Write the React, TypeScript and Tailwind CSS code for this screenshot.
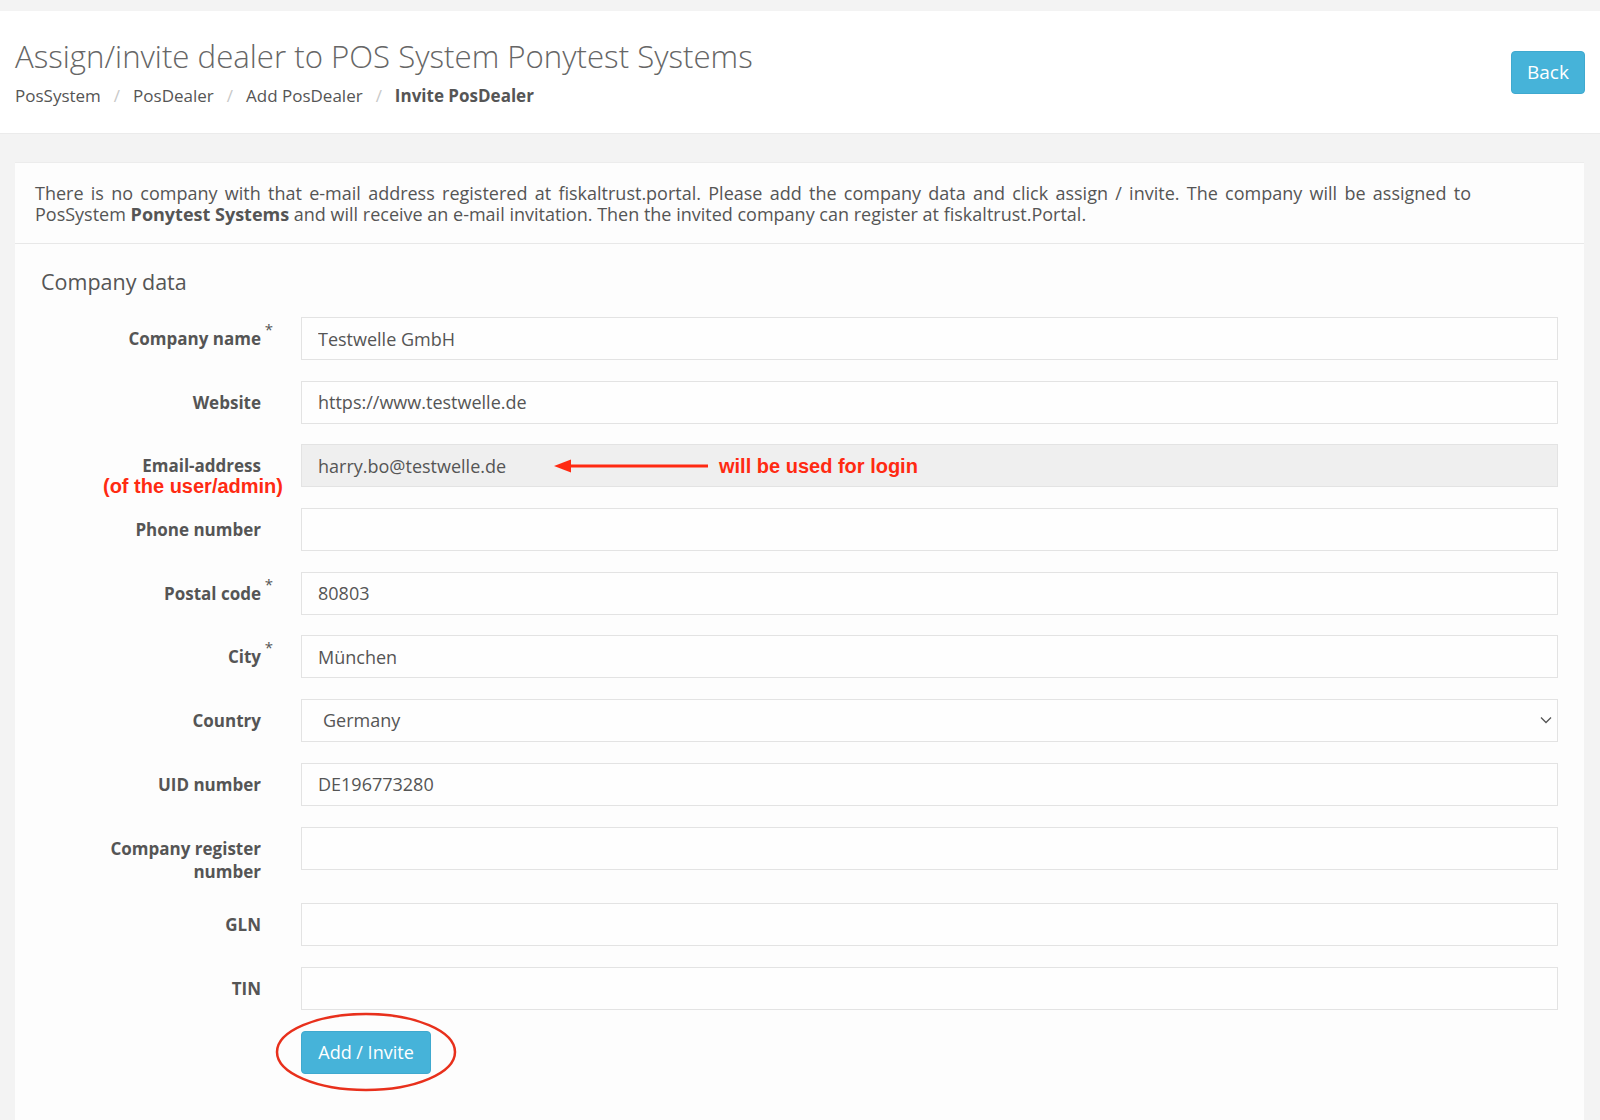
import { useState } from "react";

type Field = {
  label: string;
  value: string;
  required?: boolean;
  twoLine?: boolean;
};

const fieldsTop: Field[] = [
  { label: "Company name", value: "Testwelle GmbH", required: true },
  { label: "Website", value: "https://www.testwelle.de" },
];

const fieldsBottom: Field[] = [
  { label: "Phone number", value: "" },
  { label: "Postal code", value: "80803", required: true },
  { label: "City", value: "München", required: true },
];

const fieldsEnd: Field[] = [
  { label: "UID number", value: "DE196773280" },
  { label: "Company register number", value: "", twoLine: true },
  { label: "GLN", value: "" },
  { label: "TIN", value: "" },
];

const inputBase =
  "w-full h-[43px] border border-[#e3e3e3] px-[16px] text-[18px] text-[#555] outline-none font-['Open_Sans',sans-serif]";

function Label({ field }: { field: Field }) {
  return (
    <div className="w-[220px] shrink-0 pt-[10px] text-right text-[17px] leading-[23px] font-bold text-[#555]">
      <span className="relative">
        {field.twoLine ? (
          <>
            Company register
            <br />
            number
          </>
        ) : (
          field.label
        )}
        {field.required && (
          <span className="absolute -right-[12px] -top-[9px] text-[15px] font-normal">*</span>
        )}
      </span>
    </div>
  );
}

function Row({ field }: { field: Field }) {
  const [value, setValue] = useState(field.value);
  return (
    <div className="flex gap-[40px] mb-[20.7px]">
      <Label field={field} />
      <input
        className={inputBase + " bg-[#fefefe]"}
        value={value}
        onChange={(e) => setValue(e.target.value)}
      />
    </div>
  );
}

export default function App() {
  return (
    <div className="min-h-[1120px] flex flex-col bg-[#f3f3f3] font-['Open_Sans',sans-serif] text-[#555]">
      <div className="h-[11px]" />
      <header className="h-[123px] bg-white px-[15px] flex justify-between border-b border-[#ebebeb]">
        <div className="pt-[25px]">
          <h1 className="text-[31.2px] leading-[40px] font-light text-[#666]">
            Assign/invite dealer to POS System Ponytest Systems
          </h1>
          <nav className="mt-[8px] text-[17px] leading-[24px] flex items-center">
            <span>PosSystem</span>
            <span className="px-[13px] text-[#c8c8c8]">/</span>
            <span>PosDealer</span>
            <span className="px-[13px] text-[#c8c8c8]">/</span>
            <span>Add PosDealer</span>
            <span className="px-[13px] text-[#c8c8c8]">/</span>
            <span className="font-bold">Invite PosDealer</span>
          </nav>
        </div>
        <button className="mt-[40px] h-[43px] w-[74px] rounded-[4px] border border-[#3fa9cf] bg-[#46b3d9] text-[19px] text-white">
          Back
        </button>
      </header>
      <div className="h-[28px]" />
      <main className="flex-1 ml-[15px] mr-[16px] bg-[#fdfdfd] border-t border-[#ececec]">
        <div className="px-[20px] pt-[20px] pb-[18px] border-b border-[#e8e8e8]">
          <p className="max-w-[1436px] text-justify text-[18px] leading-[21px] text-[#555]">
            There is no company with that e-mail address registered at fiskaltrust.portal. Please add the company
            data and click assign / invite. The company will be assigned to PosSystem{" "}
            <span className="font-bold">Ponytest Systems</span> and will receive an e-mail invitation. Then the
            invited company can register at fiskaltrust.Portal.
          </p>
        </div>

        <div className="px-[26px] pt-[24px]">
          <h2 className="text-[21.5px] leading-[28px] text-[#555] mb-[21px]">Company data</h2>

          {fieldsTop.map((f) => (
            <Row key={f.label} field={f} />
          ))}

          <div className="flex gap-[40px] mb-[20.7px]">
            <div className="w-[220px] h-[43px] shrink-0 pt-[11px] text-right text-[17px] leading-[21px]">
              <div className="font-bold">Email-address</div>
              <div className="-mr-[22px] font-['Liberation_Sans',Arial,sans-serif] font-bold text-[20px] leading-[21px] text-[#ff2a12]">
                (of the user/admin)
              </div>
            </div>
            <div className="relative flex-1">
              <input className={inputBase + " bg-[#efefef]"} value="harry.bo@testwelle.de" readOnly />
              <div className="absolute left-[253px] top-0 h-[43px] flex items-center gap-[11px] pointer-events-none">
                <svg width="154" height="16" viewBox="0 0 154 16">
                  <path d="M0 8 L17 1.5 L17 14.5 Z" fill="#ff2a12" />
                  <rect x="14" y="6.5" width="140" height="3" fill="#ff2a12" />
                </svg>
                <span className="font-['Liberation_Sans',Arial,sans-serif] font-bold text-[20px] text-[#ff2a12]">
                  will be used for login
                </span>
              </div>
            </div>
          </div>

          {fieldsBottom.map((f) => (
            <Row key={f.label} field={f} />
          ))}

          <div className="flex gap-[40px] mb-[20.7px]">
            <Label field={{ label: "Country", value: "" }} />
            <div className="relative flex-1">
              <select className={inputBase + " bg-[#fefefe] appearance-none pl-[21px]"} defaultValue="Germany">
                <option>Germany</option>
                <option>Austria</option>
                <option>France</option>
              </select>
              <svg
                className="absolute right-[6px] top-[17px] pointer-events-none"
                width="12"
                height="8"
                viewBox="0 0 12 8"
              >
                <path d="M1 1.5 L6 6.5 L11 1.5" fill="none" stroke="#555" strokeWidth="1.3" />
              </svg>
            </div>
          </div>

          {fieldsEnd.map((f) => (
            <Row key={f.label} field={f} />
          ))}

          <div className="flex gap-[40px] pb-[40px]">
            <div className="w-[220px] shrink-0" />
            <div className="relative">
              <button className="h-[43px] w-[130px] rounded-[4px] border border-[#3fa9cf] bg-[#46b3d9] text-[18px] text-white">
                Add / Invite
              </button>
              <svg
                className="absolute -left-[27px] -top-[20px] pointer-events-none"
                width="184"
                height="82"
                viewBox="0 0 184 82"
              >
                <ellipse cx="92" cy="41" rx="89" ry="38" fill="none" stroke="#e8301c" strokeWidth="2.5" />
              </svg>
            </div>
          </div>
        </div>
      </main>
    </div>
  );
}
